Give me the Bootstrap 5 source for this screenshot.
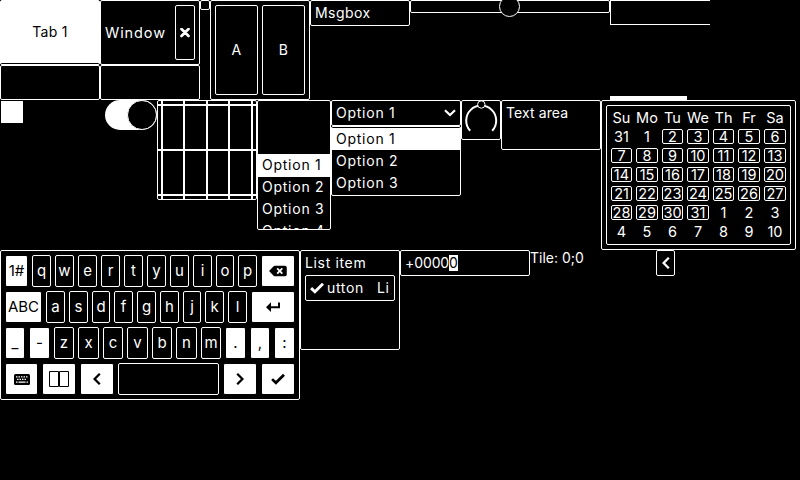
<!DOCTYPE html>
<html lang="en">
<head>
<meta charset="utf-8">
<meta name="viewport" content="width=device-width, initial-scale=1">
<title>Mono widgets</title>
<link href="https://cdn.jsdelivr.net/npm/bootstrap@5.3.0/dist/css/bootstrap.min.css" rel="stylesheet">
<style>
body{background:#000;color:#fff;font:400 14px/16px Inter,"Noto Sans",sans-serif;letter-spacing:.45px;width:800px;height:480px;overflow:hidden}
svg{display:block;flex:none}
.strip>*{flex:none}
.strip-a{height:100px}.strip-b{height:150px}
.box{border:1px solid #fff;border-radius:2px;background:#000;white-space:nowrap}
.inv{background:#fff;color:#000}
.pad{padding:4px}
.w100{width:100px}
.bar65{height:65px}.body35{height:35px}
.head{font-size:14.5px;letter-spacing:.9px}
.tab-key{height:62px;letter-spacing:.3px}
.close-key{width:20px;height:55px}
.led{width:10px;height:10px}
.matrix{width:100px;height:100px;gap:4px}
.matrix .box{width:43px}
.field{height:26px}
.slider{width:200px;height:13px}
.knob{width:21px;height:21px;left:88px;top:-5px;border-radius:50%}
.tiles{height:25px;border-right:0;border-radius:0}
.tick{width:77px;height:4px;background:#fff}
.check-cell{width:105px;padding:1px}
.check-cell div{width:22px;height:22px}
.toggle{width:52px;height:30px;border-radius:15px}
.toggle div{width:30px;height:30px;border-radius:50%}
.roller{width:74px;height:130px;letter-spacing:.75px}
.opt{height:22px;padding:3px 4px}
.roller .pick{height:23px;margin:53px 0 -1px}
.drop{width:130px;letter-spacing:.75px}
.drop-list{height:70px;padding-top:1px}
.area{height:50px;width:100px;letter-spacing:.1px}
.cal{width:195px;height:150px}
.days{display:grid;grid-template-columns:21px 22px 21px 22px 21px 22px 22px;column-gap:4px;row-gap:4px;grid-template-rows:15px repeat(6,15px);height:140px;padding:4px;letter-spacing:0;font-size:14.5px}
.days>div{display:flex;align-items:center;justify-content:center;line-height:13px}
.kb{width:300px;height:150px;font-size:15px}
.kb .keys{height:32px;gap:4px}
.kb .keys>div{flex:none;display:flex;align-items:center;justify-content:center;letter-spacing:0}
.kb .inv{border-color:#000;border-radius:2px}
.k18{width:18px}.k19{width:19px}.k20{width:20px}.k21{width:21px}.k23{width:23px}.k33{width:33px}.k34{width:34px}.k37{width:37px}.k44{width:44px}.k101{width:101px}
.list{width:100px;height:100px;letter-spacing:.65px}
.list .label{height:20px}
.run{gap:13px}
.spin{width:130px;letter-spacing:-.1px}
.tile-text{width:126px;letter-spacing:0}
.back{width:19px}
.cur{width:9px;height:16px}
</style>
<script src="https://cdn.jsdelivr.net/npm/bootstrap@5.3.0/dist/js/bootstrap.bundle.min.js"></script>
</head>
<body>
<div class="strip strip-a d-flex align-items-start">
  <div class="w100">
    <div class="box bar65"><div class="inv tab-key d-flex align-items-center justify-content-center">Tab 1</div></div>
    <div class="box body35"></div>
  </div>
  <div class="w100">
    <div class="box pad bar65 head d-flex align-items-center justify-content-between">Window
      <div class="box close-key d-flex align-items-center justify-content-center"><svg width="10" height="10"><path d="M1.5 1 8.5 8M8.5 1 1.5 8" stroke="#fff" stroke-width="2.7" stroke-linecap="round"/></svg></div>
    </div>
    <div class="box body35"></div>
  </div>
  <div class="box led"></div>
  <div class="box pad matrix d-flex">
    <div class="box d-flex align-items-center justify-content-center">A</div>
    <div class="box d-flex align-items-center justify-content-center">B</div>
  </div>
  <div class="box pad field w100">Msgbox</div>
  <div class="box slider position-relative"><div class="box knob position-absolute"></div></div>
  <div class="w100 h-100 d-flex flex-column justify-content-between">
    <div class="box tiles"></div><div class="tick"></div>
  </div>
</div>

<div class="strip strip-b d-flex align-items-start">
  <div class="check-cell"><div class="inv"></div></div>
  <div class="inv toggle d-flex justify-content-end"><div class="box"></div></div>
  <div class="box"><svg width="98" height="98"><path d="M4 0V98M26 0V98M49 0V98M71 0V98M94 0V98M0 4H98M0 49H98M0 94H98" stroke="#fff" stroke-width="2"/></svg></div>
  <div class="box roller overflow-hidden">
    <div class="opt inv pick">Option 1</div><div class="opt">Option 2</div><div class="opt">Option 3</div><div class="opt">Option 4</div>
  </div>
  <div class="drop">
    <div class="box pad field d-flex align-items-center justify-content-between">Option 1
      <svg width="13" height="10"><path d="M2 2.2 7 7 12 2.2" fill="none" stroke="#fff" stroke-width="2.2"/></svg></div>
    <div class="box drop-list"><div class="opt inv">Option 1</div><div class="opt">Option 2</div><div class="opt">Option 3</div></div>
  </div>
  <div class="box"><svg width="38" height="38" fill="none" stroke="#fff"><path d="M8.2 29.8A15 15 0 1 1 30.2 29.8" stroke-width="2"/><circle cx="19.3" cy="3.5" r="3.7" fill="#000"/></svg></div>
  <div class="box pad area">Text area</div>
  <div class="box pad cal"><div class="box days">
    <div>Su</div><div>Mo</div><div>Tu</div><div>We</div><div>Th</div><div>Fr</div><div>Sa</div>
    <div>31</div><div>1</div><div class="box">2</div><div class="box">3</div><div class="box">4</div><div class="box">5</div><div class="box">6</div>
    <div class="box">7</div><div class="box">8</div><div class="box">9</div><div class="box">10</div><div class="box">11</div><div class="box">12</div><div class="box">13</div>
    <div class="box">14</div><div class="box">15</div><div class="box">16</div><div class="box">17</div><div class="box">18</div><div class="box">19</div><div class="box">20</div>
    <div class="box">21</div><div class="box">22</div><div class="box">23</div><div class="box">24</div><div class="box">25</div><div class="box">26</div><div class="box">27</div>
    <div class="box">28</div><div class="box">29</div><div class="box">30</div><div class="box">31</div><div>1</div><div>2</div><div>3</div>
    <div>4</div><div>5</div><div>6</div><div>7</div><div>8</div><div>9</div><div>10</div>
  </div></div>
</div>

<div class="strip d-flex align-items-start">
  <div class="box pad kb d-flex flex-column gap-1">
    <div class="keys d-flex">
      <div class="box inv k23">1#</div><div class="box k19">q</div><div class="box k19">w</div><div class="box k19">e</div><div class="box k19">r</div><div class="box k19">t</div><div class="box k19">y</div><div class="box k19">u</div><div class="box k19">i</div><div class="box k18">o</div><div class="box k19">p</div>
      <div class="box inv k34"><svg width="18" height="14" viewBox="0 0 640 512"><path d="M576 64H205.26A63.97 63.97 0 0 0 160 82.75L9.37 233.37c-12.5 12.5-12.5 32.76 0 45.25L160 429.25c12 12 28.28 18.75 45.25 18.75H576c35.35 0 64-28.65 64-64V128c0-35.35-28.65-64-64-64zm-84.69 254.06c6.25 6.25 6.25 16.38 0 22.63l-22.62 22.62c-6.25 6.25-16.38 6.25-22.63 0L384 301.25l-62.06 62.06c-6.25 6.25-16.38 6.25-22.63 0l-22.62-22.62c-6.25-6.25-6.25-16.38 0-22.63L338.75 256l-62.06-62.06c-6.25-6.25-6.25-16.38 0-22.63l22.62-22.62c6.25-6.25 16.38-6.25 22.63 0L384 210.75l62.06-62.06c6.25-6.25 16.38-6.25 22.63 0l22.62 22.62c6.25 6.25 6.25 16.38 0 22.63L429.25 256l62.06 62.06z"/></svg></div>
    </div>
    <div class="keys d-flex">
      <div class="box inv k37">ABC</div><div class="box k19">a</div><div class="box k19">s</div><div class="box k18">d</div><div class="box k19">f</div><div class="box k19">g</div><div class="box k19">h</div><div class="box k18">j</div><div class="box k19">k</div><div class="box k19">l</div>
      <div class="box inv k44"><svg width="14" height="10"><path d="M13 .5V5.2H3" fill="none" stroke="#000" stroke-width="2"/><path d="M0 5.2 5 .3V10Z"/></svg></div>
    </div>
    <div class="keys d-flex">
      <div class="box inv k20">_</div><div class="box inv k21">-</div><div class="box k20">z</div><div class="box k21">x</div><div class="box k20">c</div><div class="box k21">v</div><div class="box k20">b</div><div class="box k21">n</div><div class="box k20">m</div><div class="box inv k21">.</div><div class="box inv k20">,</div><div class="box inv k21">:</div>
    </div>
    <div class="keys d-flex">
      <div class="box inv k33"><svg width="16" height="11"><rect width="16" height="11" rx="1.5"/><path d="M2 2.8H14M3 5.4H13" stroke="#fff" stroke-width="1.3" stroke-dasharray="1.5 1"/><path d="M2 8.2H3.5M4.5 8.2H11.5M12.5 8.2H14" stroke="#fff" stroke-width="1.3"/></svg></div>
      <div class="box inv k34"><svg width="20" height="16" fill="none" stroke="#000"><path d="M.5.5H9.5V15.5H.5ZM10.5.5H19.5V15.5H10.5Z"/></svg></div>
      <div class="box inv k34"><svg width="8" height="12"><path d="M6.8.8 1.6 6 6.8 11.2" fill="none" stroke="#000" stroke-width="2.3"/></svg></div>
      <div class="box k101"></div>
      <div class="box inv k34"><svg width="8" height="12"><path d="M1.2.8 6.4 6 1.2 11.2" fill="none" stroke="#000" stroke-width="2.3"/></svg></div>
      <div class="box inv k34"><svg width="14" height="12"><path d="M1.1 6.1 4.9 9.8 13 1.7" fill="none" stroke="#000" stroke-width="2.7"/></svg></div>
    </div>
  </div>
  <div class="box pad list">
    <div class="label">List item</div>
    <div class="box pad field d-flex align-items-center overflow-hidden">
      <svg width="17" height="12"><path d="M1.1 6.1 4.9 9.8 13 1.7" fill="none" stroke="#fff" stroke-width="2.9"/></svg>
      <div class="run d-flex overflow-hidden flex-grow-1"><span>utton</span><span>Li</span></div>
    </div>
  </div>
  <div class="box pad field spin d-flex">+0000<span class="inv cur">0</span></div>
  <div class="tile-text">Tile: 0;0</div>
  <div class="box field back d-flex align-items-center justify-content-center"><svg width="8" height="12"><path d="M6.8.8 1.6 6 6.8 11.2" fill="none" stroke="#fff" stroke-width="2.3"/></svg></div>
</div>
</body>
</html>
